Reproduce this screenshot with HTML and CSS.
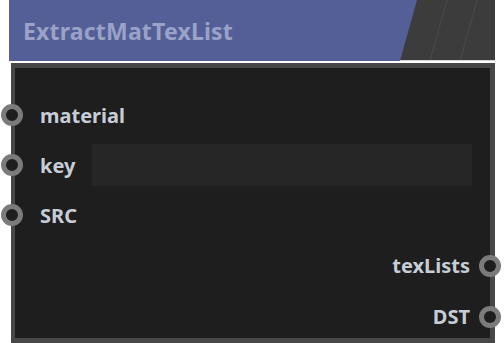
FILE: index.html
```html
<!DOCTYPE html>
<html lang="en">

<head>
    <meta charset="UTF-8">
    <meta name="viewport" content="width=device-width, initial-scale=1.0">
    <title>ExtractMatTexList</title>
    <link rel="stylesheet" href="styles.css">
</head>

<body>

    <div class="node">
        <div class="header">
            <span class="title">ExtractMatTexList</span>
            <svg class="header-deco" width="95" height="61" viewBox="0 0 95 61">
                <polygon points="17,0 95,0 95,61 0,61" fill="#3c3c3c" />
                <line x1="47" y1="0" x2="30" y2="61" stroke="#4b4b4b" stroke-width="1" />
                <line x1="77" y1="0" x2="60" y2="61" stroke="#4b4b4b" stroke-width="1" />
                <line x1="0" y1="60.5" x2="95" y2="60.5" stroke="#d4d4d4" stroke-width="1" />
            </svg>
        </div>

        <div class="body">
            <div class="row input">
                <span class="socket"></span>
                <span class="label">material</span>
            </div>
            <div class="row input">
                <span class="socket"></span>
                <span class="label">key</span>
                <input type="text" class="field">
            </div>
            <div class="row input">
                <span class="socket"></span>
                <span class="label">SRC</span>
            </div>
            <div class="row output">
                <span class="label">texLists</span>
                <span class="socket"></span>
            </div>
            <div class="row output">
                <span class="label">DST</span>
                <span class="socket"></span>
            </div>
        </div>
    </div>

</body>

</html>
```

FILE: styles.css
```css
body {
    margin: 0;
    padding: 0;
    background-color: #ffffff;
    font-family: "Noto Sans", "Open Sans", sans-serif;
    width: 504px;
    height: 343px;
    overflow: hidden;
}

.node {
    margin-left: 9px;
    width: 486px;
}

.header {
    height: 61px;
    background-color: #535f96;
    display: flex;
    align-items: center;
    justify-content: space-between;
}

.title {
    padding-left: 14px;
    font-size: 23px;
    font-weight: bold;
    color: #9aa2c8;
    letter-spacing: 0.2px;
}

.header-deco {
    display: block;
    align-self: stretch;
}

.body {
    margin-top: 2px;
    margin-left: 2px;
    height: 270px;
    background-color: #1e1e1e;
    border: 5px solid #474747;
    border-left-width: 4px;
    padding-top: 22px;
    box-sizing: border-box;
    height: 280px;
}

.row {
    height: 50px;
    display: flex;
    align-items: center;
}

.row.output {
    justify-content: flex-end;
    height: 51px;
}

.socket {
    width: 12px;
    height: 12px;
    border: 5px solid #7b7b7b;
    border-radius: 50%;
    background-color: #1e1e1e;
    flex-shrink: 0;
}

.input .socket {
    margin-left: -14px;
    margin-right: 17px;
}

.output .socket {
    margin-left: 9px;
    margin-right: -11px;
}

.label {
    font-size: 20px;
    font-weight: bold;
    color: #c6cdd7;
}

.field {
    flex: 1;
    height: 42px;
    margin-left: 17px;
    margin-right: 18px;
    padding: 0;
    border: none;
    background-color: #262626;
}
```
